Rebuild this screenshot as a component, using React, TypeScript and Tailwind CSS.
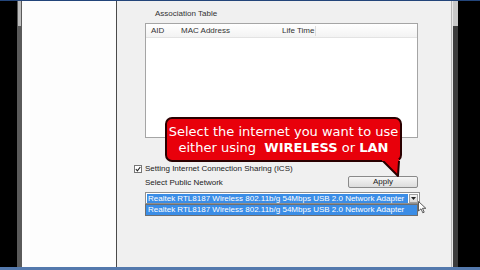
const ui = { fontFamily: '"Liberation Sans", Arial, sans-serif' };
const callout = { fontFamily: '"DejaVu Sans", Verdana, sans-serif' };

const adapter = "Realtek RTL8187 Wireless 802.11b/g 54Mbps USB 2.0 Network Adapter";

export default function App() {
  return (
    <div className="relative w-[480px] h-[270px] overflow-hidden bg-black flex flex-col" style={ui}>
      <div className="h-[1px] bg-[#23457a]" />
      <div className="flex flex-1 min-h-0">
        <div className="w-[17px] bg-black" />
        <div className="w-[5px] flex flex-col bg-[#5a5a5a]">
          <div className="h-[25px] bg-[#bdbdbd] mx-[1px]" />
        </div>
        <div className="w-[94px] bg-[#fdfdfd]" />
        <div className="w-[1px] bg-[#4a4a4a]" />

        {/* main dialog panel */}
        <div className="w-[334px] bg-[#f0f0f0] flex flex-col pl-[17px] pt-[8px] text-[8px] text-[#222]">
          <div className="ml-[21px] h-[10px] leading-[10px] text-[#333]">Association Table</div>
          <div className="ml-[11px] mt-[4px] w-[273px] h-[115px] border border-[#a5a5a5] bg-white flex flex-col">
            <div className="h-[14px] flex items-center border-b border-[#e3e3e3] bg-gradient-to-b from-white to-[#f3f3f3] text-[#333]">
              <div className="w-[35px] pl-[5px]">AID</div>
              <div className="w-[101px]">MAC Address</div>
              <div className="w-[34px] border-r border-[#dcdcdc] h-[10px] leading-[10px]">Life Time</div>
            </div>
          </div>

          <div className="mt-[26px] h-[10px] flex items-center gap-[3px]">
            <div className="w-[8px] h-[8px] border border-[#777] bg-white flex items-center justify-center">
              <svg width="6" height="6" viewBox="0 0 6 6">
                <path d="M0.8 3 L2.4 4.8 L5.3 1" stroke="#222" strokeWidth="1.1" fill="none" />
              </svg>
            </div>
            <span>Setting Internet Connection Sharing (ICS)</span>
          </div>

          <div className="mt-[2px] ml-[11px] w-[273px] h-[12px] flex items-center justify-between">
            <span className="pt-[2px]">Select Public Network</span>
            <div className="w-[70px] h-[12px] border border-[#8a8a8a] rounded-[2px] bg-gradient-to-b from-[#f6f6f6] to-[#dcdcdc] flex items-center justify-center text-[#222]">
              Apply
            </div>
          </div>

          <div className="mt-[4px] ml-[11px] w-[275px] h-[12px] border border-[#8f8f8f] bg-white flex items-center pl-[1px]">
            <div className="w-[261px] h-[9px] bg-[#3b8de6] text-white leading-[9px] pl-[1px] whitespace-nowrap overflow-hidden">
              {adapter}
            </div>
            <div className="ml-auto mr-[1px] w-[9px] h-[9px] border border-[#a0a0a0] bg-gradient-to-b from-[#f4f4f4] to-[#d8d8d8] flex items-center justify-center">
              <svg width="5" height="3" viewBox="0 0 5 3">
                <path d="M0 0 H5 L2.5 3 Z" fill="#222" />
              </svg>
            </div>
          </div>
          <div className="ml-[11px] w-[273px] h-[12px] border border-[#6f6f6f] bg-[#3b8de6] text-white leading-[10px] pl-[2px] whitespace-nowrap overflow-hidden">
            {adapter}
          </div>
        </div>

        <div className="w-[1px] bg-[#b5b5b5]" />
        <div className="w-[1px] bg-[#e8e8e8]" />
        <div className="w-[5px] flex flex-col bg-[#3c3c3c]">
          <div className="h-[25px] bg-[#c8c8c8]" />
        </div>
        <div className="flex-1 bg-black" />
      </div>
      <div className="h-[3px] bg-[#5479ad]" />

      {/* red callout */}
      <div
        className="absolute left-[165px] top-[117px] w-[237px] h-[45px] rounded-[7px] bg-[#e8000b] border-2 border-[#2a0000] text-white flex flex-col items-center justify-center text-[13px] leading-[16px]"
        style={callout}
      >
        <div>Select the internet you want to use</div>
        <div>
          either using&nbsp; <b>WIRELESS</b> or <b>LAN</b>
        </div>
      </div>
      <svg className="absolute left-[380px] top-[159px]" width="24" height="20" viewBox="0 0 24 20">
        <path d="M3 2 L18 17 L19 2" fill="#e8000b" stroke="#2a0000" strokeWidth="2" strokeLinejoin="round" />
        <path d="M2 1 H19" stroke="#e8000b" strokeWidth="2" />
      </svg>

      {/* mouse cursor */}
      <svg className="absolute left-[418px] top-[201px]" width="9" height="13" viewBox="0 0 9 13">
        <path d="M0.5 0.5 L0.5 10 L3 7.8 L4.8 11.8 L6.2 11.2 L4.5 7.3 L7.8 7.3 Z" fill="#fff" stroke="#333" strokeWidth="0.8" />
      </svg>
    </div>
  );
}
